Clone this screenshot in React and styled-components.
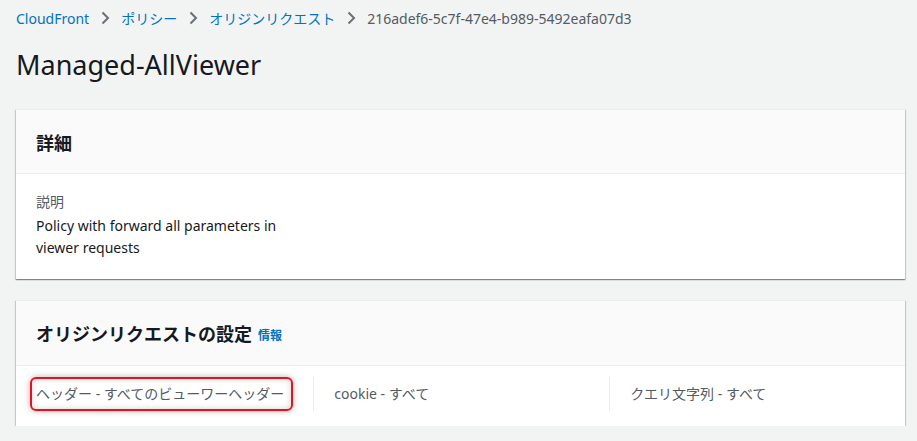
import React from "react";
import styled, { createGlobalStyle } from "styled-components";

const Global = createGlobalStyle`
  html, body {
    margin: 0;
    padding: 0;
    background: #f2f3f3;
  }
  body {
    font-family: "Noto Sans", "Noto Sans CJK JP", sans-serif;
    color: #16191f;
  }
`;

const Page = styled.div`
  padding: 0 12px 0 16px;
  display: flex;
  flex-direction: column;
`;

const Crumbs = styled.nav`
  display: flex;
  align-items: center;
  height: 36px;
  font-size: 14px;
  gap: 11px;
`;

const Crumb = styled.a`
  color: ${(p) => (p.current ? "#545b64" : "#0073bb")};
  text-decoration: none;
  white-space: nowrap;
`;

const Chevron = () => (
  <svg width="10" height="14" viewBox="0 0 10 14">
    <path d="M2.5 1.5 L8 7 L2.5 12.5" fill="none" stroke="#687078" strokeWidth="2" />
  </svg>
);

const Title = styled.h1`
  margin: 7px 0 0;
  font-size: 27px;
  font-weight: 400;
  line-height: 44px;
  color: #16191f;
`;

const Card = styled.section`
  margin-top: ${(p) => p.top}px;
  background: #fff;
  border-top: 1px solid #eaeded;
  box-shadow: 0 1px 1px 0 rgba(0, 28, 36, 0.3), 1px 1px 1px 0 rgba(0, 28, 36, 0.15),
    -1px 1px 1px 0 rgba(0, 28, 36, 0.15);
`;

const CardHeader = styled.header`
  background: #fafafa;
  border-bottom: 1px solid #eaeded;
  height: ${(p) => p.h}px;
  padding: 0 20px;
  display: flex;
  align-items: center;
  gap: 6px;
`;

const HeaderText = styled.h2`
  margin: 0;
  font-size: 18px;
  font-weight: 700;
  color: #16191f;
`;

const InfoLink = styled.a`
  font-size: 12px;
  font-weight: 700;
  color: #0073bb;
  text-decoration: none;
  margin-top: 4px;
`;

const Columns = styled.div`
  display: grid;
  grid-template-columns: repeat(3, 1fr);
  padding: ${(p) => p.pad};
`;

const Column = styled.div`
  padding: 0 20px;
  border-left: ${(p) => (p.divider ? "1px solid #eaeded" : "none")};
  display: flex;
  flex-direction: column;
  justify-content: center;
  min-height: ${(p) => (p.divider ? "24px" : "auto")};
`;

const Label = styled.div`
  font-size: 14px;
  line-height: 22px;
  color: #545b64;
  margin-bottom: 2px;
`;

const Value = styled.div`
  font-size: 14px;
  line-height: 22px;
  color: #16191f;
`;

const Setting = styled.div`
  font-size: 14px;
  line-height: 22px;
  color: #545b64;
  white-space: nowrap;
`;

const Highlight = styled.div`
  margin-left: -6px;
  padding: 4px 7px 4px 4px;
  border: 2px solid #e8101c;
  border-radius: 6px;
  box-shadow: 0 0 6px rgba(0, 0, 0, 0.3), inset 0 0 6px rgba(0, 0, 0, 0.18);
  align-self: flex-start;
`;

export default function App() {
  return (
    <Page>
      <Global />
      <Crumbs>
        <Crumb href="#">CloudFront</Crumb>
        <Chevron />
        <Crumb href="#">ポリシー</Crumb>
        <Chevron />
        <Crumb href="#">オリジンリクエスト</Crumb>
        <Chevron />
        <Crumb current>216adef6-5c7f-47e4-b989-5492eafa07d3</Crumb>
      </Crumbs>
      <Title>Managed-AllViewer</Title>

      <Card top={22}>
        <CardHeader h={63}>
          <HeaderText>詳細</HeaderText>
        </CardHeader>
        <Columns pad="17px 0 20px">
          <Column>
            <Label>説明</Label>
            <Value>Policy with forward all parameters in viewer requests</Value>
          </Column>
        </Columns>
      </Card>

      <Card top={21}>
        <CardHeader h={64}>
          <HeaderText>オリジンリクエストの設定</HeaderText>
          <InfoLink href="#">情報</InfoLink>
        </CardHeader>
        <Columns pad="11px 0 15px">
          <Column>
            <Highlight>
              <Setting>ヘッダー - すべてのビューワーヘッダー</Setting>
            </Highlight>
          </Column>
          <Column divider>
            <Setting>cookie - すべて</Setting>
          </Column>
          <Column divider>
            <Setting>クエリ文字列 - すべて</Setting>
          </Column>
        </Columns>
      </Card>
    </Page>
  );
}
